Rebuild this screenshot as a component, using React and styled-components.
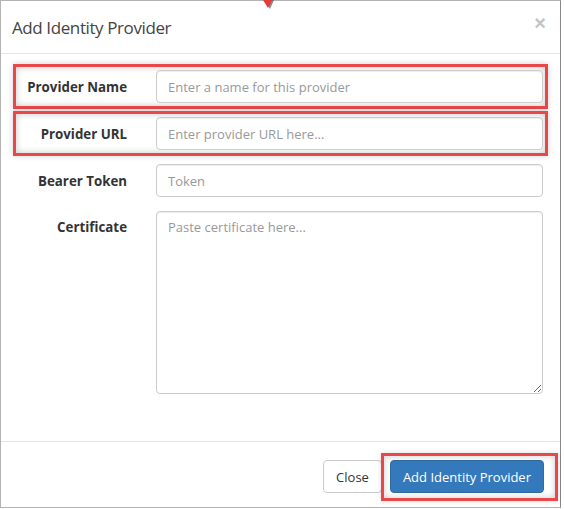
import styled, { createGlobalStyle } from "styled-components";

const GlobalStyle = createGlobalStyle`
  body {
    margin: 0;
    background: #fff;
    font-family: "Open Sans", "Liberation Sans", sans-serif;
  }
  * { box-sizing: border-box; }
`;

const rows = [
  { label: "Provider Name", placeholder: "Enter a name for this provider", marked: true },
  { label: "Provider URL", placeholder: "Enter provider URL here...", marked: true },
  { label: "Bearer Token", placeholder: "Token" },
];

const App = () => {
  return (
    <>
      <GlobalStyle />
      <Modal>
        <Pin viewBox="0 0 12 10">
          <path d="M1 0 L11 0 L7 9 Z" fill="#555" opacity="0.7" />
          <path d="M0 0 L9 0 L5 8 Z" fill="#e8393a" />
        </Pin>
        <Header>
          <Title>Add Identity Provider</Title>
          <CloseX>×</CloseX>
        </Header>
        <Body>
          {rows.map((r) => (
            <Row key={r.label} $marked={r.marked}>
              <Label>{r.label}</Label>
              <Input placeholder={r.placeholder} />
            </Row>
          ))}
          <Row $top>
            <Label $top>Certificate</Label>
            <TextArea placeholder="Paste certificate here..." />
          </Row>
        </Body>
        <Footer>
          <Button>Close</Button>
          <Marked>
            <Button $primary>Add Identity Provider</Button>
          </Marked>
        </Footer>
      </Modal>
    </>
  );
};

export default App;

const Modal = styled.div`
  position: relative;
  width: 561px;
  height: 508px;
  border: 1px solid #b3b3b3;
  border-right-color: #888;
  background: #fff;
  display: flex;
  flex-direction: column;
`;

const Pin = styled.svg`
  position: absolute;
  top: -1px;
  left: 262px;
  width: 12px;
  height: 10px;
`;

const Header = styled.div`
  height: 53px;
  padding: 0 14px 0 11px;
  display: flex;
  align-items: center;
  justify-content: space-between;
  border-bottom: 1px solid #e5e5e5;
`;

const Title = styled.h4`
  margin: 0;
  font-size: 17px;
  font-weight: 400;
  color: #444;
  letter-spacing: -0.4px;
  padding-top: 1px;
`;

const CloseX = styled.span`
  font-family: "Liberation Sans", sans-serif;
  font-size: 20px;
  font-weight: 700;
  color: #c4c4c4;
  margin-top: -8px;
`;

const Body = styled.div`
  flex: 1;
  padding: 10px 12px 0 12px;
  display: flex;
  flex-direction: column;
  gap: 2px;
`;

const Row = styled.div`
  display: grid;
  grid-template-columns: 109px 1fr;
  column-gap: 29px;
  align-items: ${(p) => (p.$top ? "start" : "center")};
  padding: 3px 2px 3px 2px;
  border: 3px solid ${(p) => (p.$marked ? "#e8484a" : "transparent")};
  box-shadow: ${(p) =>
    p.$marked
      ? "inset 0 0 7px rgba(0,0,0,0.22), 0 0 6px rgba(0,0,0,0.18)"
      : "none"};
`;

const Label = styled.label`
  text-align: right;
  font-size: 13.3px;
  font-weight: 700;
  color: #333;
  white-space: nowrap;
  padding-top: ${(p) => (p.$top ? "7px" : "0")};
`;

const Input = styled.input`
  height: 33px;
  width: 100%;
  border: 1px solid #ccc;
  border-radius: 4px;
  padding: 0 11px;
  font-family: "Open Sans", "Liberation Sans", sans-serif;
  font-size: 13px;
  color: #555;
  background: #fff;
  box-shadow: inset 0 1px 1px rgba(0,0,0,0.075);
  &::placeholder { color: #999; }
`;

const TextArea = styled.textarea`
  height: 183px;
  width: 100%;
  resize: vertical;
  border: 1px solid #ccc;
  border-radius: 4px;
  padding: 6px 11px;
  font-family: "Open Sans", "Liberation Sans", sans-serif;
  font-size: 13px;
  box-shadow: inset 0 1px 1px rgba(0,0,0,0.075);
  &::placeholder { color: #999; }
`;

const Footer = styled.div`
  height: 66px;
  border-top: 1px solid #e5e5e5;
  display: flex;
  align-items: center;
  justify-content: flex-end;
  gap: 8px;
  padding: 4px 16px 0 0;
`;

const Marked = styled.span`
  position: relative;
  display: inline-flex;
  &::after {
    content: "";
    position: absolute;
    inset: -7px -14px -8px -9px;
    border: 3px solid #e8484a;
    box-shadow: inset 0 0 7px rgba(0,0,0,0.2), 0 0 5px rgba(0,0,0,0.15);
    pointer-events: none;
  }
`;

const Button = styled.button`
  height: 33px;
  padding: 0 12px;
  border-radius: 4px;
  border: 1px solid ${(p) => (p.$primary ? "#2e6da4" : "#ccc")};
  background: ${(p) => (p.$primary ? "#3579bd" : "#fff")};
  color: ${(p) => (p.$primary ? "#fff" : "#333")};
  font-family: "Open Sans", "Liberation Sans", sans-serif;
  font-size: 13px;
`;
